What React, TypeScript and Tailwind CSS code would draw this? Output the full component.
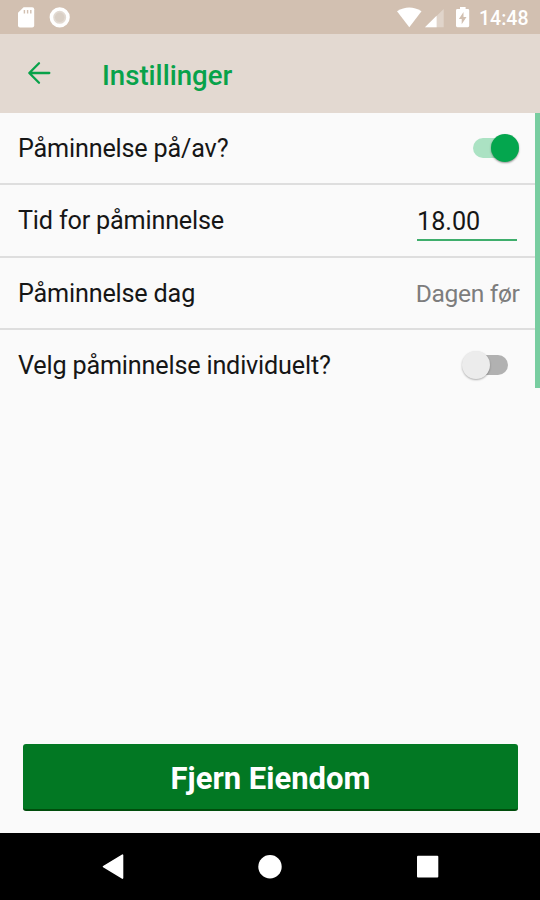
import React from "react";

function Row({ label, last, children }: { label: string; last?: boolean; children: React.ReactNode }) {
  return (
    <div className={`flex h-[72.33px] items-center justify-between pl-[18px] ${last ? "" : "border-b-2 border-[#dedede]"}`}>
      <span className={`text-[25.2px] leading-8 tracking-[-0.18px] text-[#161616] ${last ? "" : "pt-[2px]"}`}>{label}</span>
      {children}
    </div>
  );
}

function StatusBar() {
  return (
    <div className="flex h-[34px] shrink-0 items-center justify-between bg-[#d2c0b1] text-white">
      <svg width="80" height="34" viewBox="0 0 80 34">
        <path d="M23.600 7.200h8.600a2 2 0 0 1 2 2v16.400a2 2 0 0 1-2 2H20a2 2 0 0 1-2-2V12.800z" fill="#fff" />
        <path d="M24.400 10v3.400M27.600 10v3.400M30.800 10v3.400" stroke="#d2c0b1" strokeWidth="1.400" />
        <circle cx="59.700" cy="17.300" r="8.300" fill="#e2dad2" stroke="#fff" strokeWidth="3.600" />
        <circle cx="59.700" cy="17.300" r="4.800" fill="#d9cfc5" />
      </svg>
      <div className="flex items-center">
        <svg width="80" height="34" viewBox="0 0 80 34">
          <path d="M2 11.300Q14.300 3.800 26.500 11.300L14.300 27.300z" fill="#fff" />
          <path d="M48.700 9v18.200H30z" fill="#fff" opacity=".32" />
          <path d="M41.600 15.800v11.400H30z" fill="#fff" />
          <path fillRule="evenodd" d="M64 7h5.600v2h2.200a1.400 1.400 0 0 1 1.400 1.400v15.400a1.400 1.400 0 0 1-1.400 1.400H61.400a1.400 1.400 0 0 1-1.400-1.400V10.400A1.400 1.400 0 0 1 61.400 9H64zM67.500 12l-4.600 7h2.800v5.200l4.800-7.200h-3z" transform="translate(1 0)" fill="#fff" />
        </svg>
        <span className="w-[65px] pl-[4px] pt-[4px] text-[19.500px] font-medium leading-6">14:48</span>
      </div>
    </div>
  );
}

export default function App() {
  return (
    <div className="flex h-[900px] w-[540px] flex-col overflow-hidden bg-[#fafafa] font-['Roboto',sans-serif]">
      <StatusBar />
      <header className="flex h-[79px] shrink-0 items-center bg-[#e3d9d1] text-[#08a24a]">
        <svg className="mb-[1px] ml-[27px]" width="25" height="24" viewBox="0 0 25 24" fill="none" stroke="currentColor" strokeWidth="2.3" strokeLinecap="round" strokeLinejoin="round">
          <path d="M22.300 12H2.500M12 2.300L2.300 12l9.700 9.700" />
        </svg>
        <h1 className="ml-[50px] mt-[5px] text-[27.6px] font-medium leading-8">Instillinger</h1>
      </header>
      <main className="relative flex-1">
        <Row label="Påminnelse på/av?">
          <div className="relative mb-[1px] mr-[21.5px] flex h-[28px] w-[46px] items-center">
            <div className="h-[20px] w-[42px] rounded-full bg-[#abe2c3]" />
            <div className="absolute right-0 top-0 size-[28px] rounded-full bg-[#04a64e] shadow-[0_1px_2px_rgba(0,0,0,0.4)]" />
          </div>
        </Row>
        <Row label="Tid for påminnelse">
          <div className="mr-[23px] mt-[5px] h-[36px] w-[100px] border-b-2 border-[#3fae6c] pt-px text-[25.2px] leading-8 text-[#161616]">18.00</div>
        </Row>
        <Row label="Påminnelse dag">
          <span className="mr-[20.5px] mt-[3px] text-[24.600px] leading-8 tracking-[-0.34px] text-[#7d7d7d]">Dagen før</span>
        </Row>
        <Row label="Velg påminnelse individuelt?" last>
          <div className="relative mb-[2px] mr-[32px] flex h-[28px] w-[46px] items-center justify-end">
            <div className="h-[20px] w-[38px] rounded-full bg-[#b1b1b1]" />
            <div className="absolute left-0 top-0 size-[28px] rounded-full bg-[#ececec] shadow-[0_1px_2px_rgba(0,0,0,0.3)]" />
          </div>
        </Row>
        <div className="absolute right-0 top-0 h-[274.5px] w-[5.5px] bg-[#78cda0]" />
      </main>
      <div className="px-[22.500px] pb-[22px]">
        <button className="block h-[67px] w-full rounded-[3px] border-b-2 border-[#004d0c] bg-[#027823] pl-px pt-[5px] text-[31px] font-bold leading-8 text-white">Fjern Eiendom</button>
      </div>
      <nav className="h-[67px] shrink-0 bg-black">
        <svg width="540" height="67" viewBox="0 0 540 67" fill="#fff">
          <path d="M122.500 22.500v23L103.500 34z" stroke="#fff" strokeWidth="1.600" strokeLinejoin="round" transform="translate(0 -.4)" />
          <circle cx="270" cy="33.700" r="11.700" />
          <rect x="417" y="22.700" width="21.300" height="21.700" rx="1" />
        </svg>
      </nav>
    </div>
  );
}
